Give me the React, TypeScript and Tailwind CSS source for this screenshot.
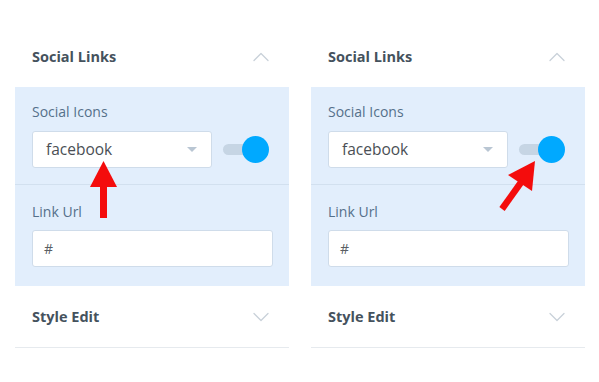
import { ChevronUp, ChevronDown } from "lucide-react"

function Panel({ arrow }: { arrow: "up" | "diag" }) {
  return (
    <div className="w-[274px] relative">
      {/* header */}
      <div className="h-[60px] flex items-center justify-between pl-[17px] pr-[14px]">
        <span className="text-[14.5px] font-bold text-[#45525d]">Social Links</span>
        <ChevronUp className="w-[28px] h-[28px] text-[#c9d1d9]" strokeWidth={1.1} />
      </div>

      {/* body */}
      <div className="bg-[#e2eefc]">
        <div className="pt-[16px] pb-[16px] pl-[17px] pr-[16px] border-b border-[#d2e0ef]">
          <div className="text-[14px] leading-[18px] text-[#55708a]">Social Icons</div>
          <div className="mt-[10px] flex items-center gap-[11px]">
            <div className="w-[180px] h-[37px] bg-white border border-[#cfdcea] rounded-[3px] flex items-center justify-between pl-[13px] pr-[14px]">
              <span className="text-[15.5px] text-[#4a4f55]">facebook</span>
              <span className="w-0 h-0 border-l-[5px] border-r-[5px] border-t-[5px] border-l-transparent border-r-transparent border-t-[#b9c6d3]" />
            </div>
            <div className="relative w-[46px] h-[27px]">
              <div className="absolute left-0 top-[8px] w-[36px] h-[11px] rounded-full bg-[#c6d5e4]" />
              <div className="absolute right-0 top-0 w-[27px] h-[27px] rounded-full bg-[#00a9ff]" />
            </div>
          </div>
        </div>
        <div className="pt-[18px] pb-[19px] pl-[17px] pr-[16px]">
          <div className="text-[14px] leading-[18px] text-[#55708a]">Link Url</div>
          <div className="mt-[9px] h-[37px] bg-white border border-[#cfdcea] rounded-[3px] flex items-center pl-[11px]">
            <span className="text-[14px] text-[#5a5f64]">#</span>
          </div>
        </div>
      </div>

      {/* collapsed section */}
      <div className="h-[62px] flex items-center justify-between pl-[17px] pr-[14px] border-b border-[#e6eaee]">
        <span className="text-[14.5px] font-bold text-[#45525d]">Style Edit</span>
        <ChevronDown className="w-[28px] h-[28px] text-[#c9d1d9]" strokeWidth={1.1} />
      </div>

      {/* red arrow annotation */}
      {arrow === "up" ? (
        <svg className="absolute left-[75px] top-[134px]" width="30" height="60" viewBox="0 0 30 60">
          <polygon points="13.5,0 27,26 0,26" fill="#f40c0c" />
          <rect x="10" y="24" width="7" height="33" fill="#f40c0c" />
        </svg>
      ) : (
        <svg className="absolute left-[185px] top-[134px]" width="45" height="60" viewBox="0 0 45 60">
          <polygon points="39,0 36,30 12,14" fill="#f40c0c" />
          <line x1="26" y1="20" x2="6" y2="48" stroke="#f40c0c" strokeWidth="6.5" />
        </svg>
      )}
    </div>
  )
}

export default function App() {
  return (
    <div className="w-[599px] h-[382px] bg-white flex gap-[22px] pl-[15px] pt-[27px]" style={{ fontFamily: "'Open Sans', sans-serif" }}>
      <Panel arrow="up" />
      <Panel arrow="diag" />
    </div>
  )
}
